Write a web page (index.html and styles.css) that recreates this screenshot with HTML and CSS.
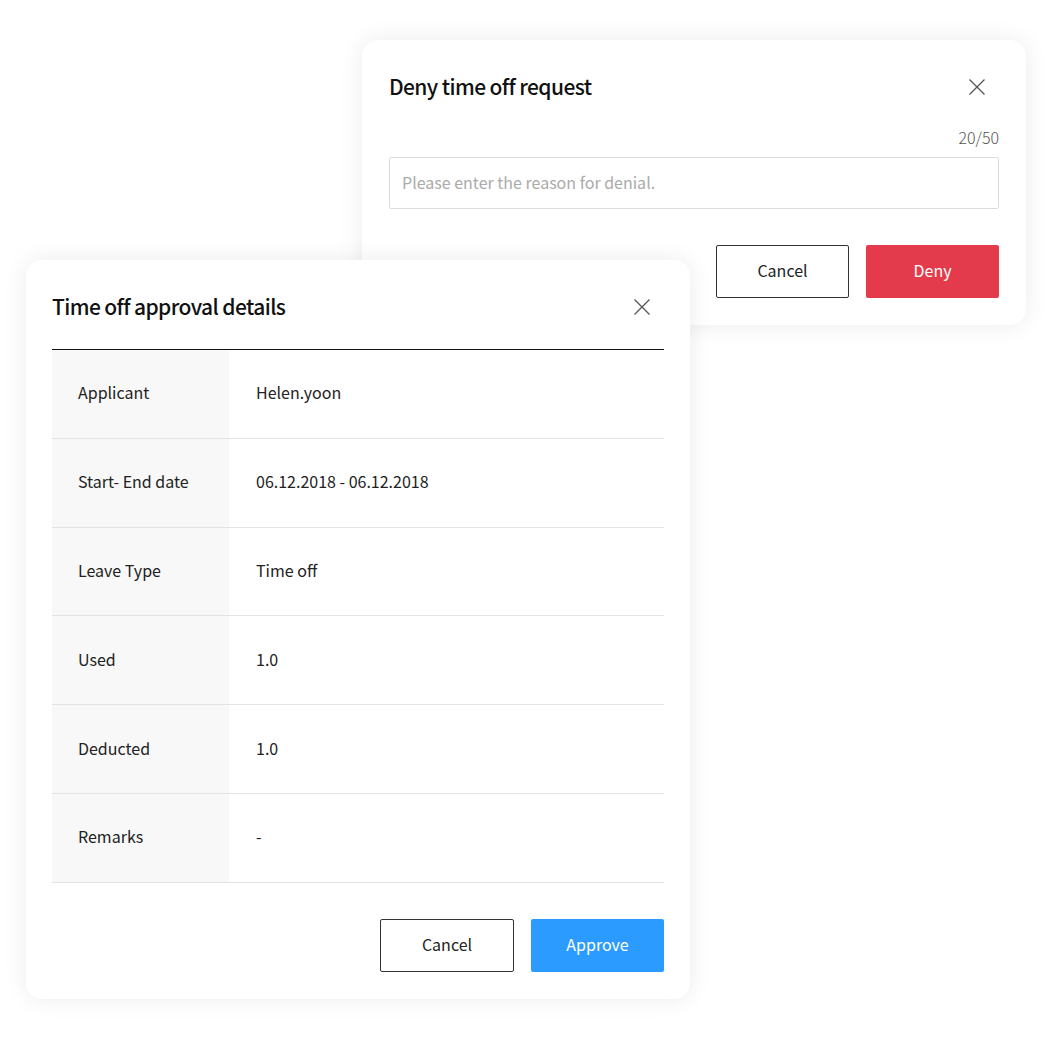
FILE: index.html
```html
<!DOCTYPE html>
<html lang="en">
<head>
<meta charset="utf-8">
<title>Time off approval</title>
<link rel="stylesheet" href="styles.css">
</head>
<body>
<div class="canvas">
  <section class="dialog dialog-deny">
    <header class="dialog-header">
      <h2 class="dialog-title">Deny time off request</h2>
      <button class="close-btn" aria-label="Close">
        <svg width="16" height="16" viewBox="0 0 16 16"><path d="M0.5 0.5 L15.5 15.5 M15.5 0.5 L0.5 15.5" stroke="#555" stroke-width="1.3" fill="none"/></svg>
      </button>
    </header>
    <div class="counter">20/50</div>
    <div class="text-input">Please enter the reason for denial.</div>
    <div class="actions">
      <button class="btn btn-outline">Cancel</button>
      <button class="btn btn-red">Deny</button>
    </div>
  </section>

  <section class="dialog dialog-details">
    <header class="dialog-header">
      <h2 class="dialog-title">Time off approval details</h2>
      <button class="close-btn" aria-label="Close">
        <svg width="16" height="16" viewBox="0 0 16 16"><path d="M0.5 0.5 L15.5 15.5 M15.5 0.5 L0.5 15.5" stroke="#555" stroke-width="1.3" fill="none"/></svg>
      </button>
    </header>
    <div class="details">
      <div class="row"><div class="label">Applicant</div><div class="value">Helen.yoon</div></div>
      <div class="row"><div class="label">Start- End date</div><div class="value">06.12.2018 - 06.12.2018</div></div>
      <div class="row"><div class="label">Leave Type</div><div class="value">Time off</div></div>
      <div class="row"><div class="label">Used</div><div class="value">1.0</div></div>
      <div class="row"><div class="label">Deducted</div><div class="value">1.0</div></div>
      <div class="row"><div class="label">Remarks</div><div class="value">-</div></div>
    </div>
    <div class="actions">
      <button class="btn btn-outline">Cancel</button>
      <button class="btn btn-blue">Approve</button>
    </div>
  </section>
</div>
</body>
</html>
```

FILE: styles.css
```css
* { box-sizing: border-box; }
html, body {
  margin: 0;
  padding: 0;
  background: #ffffff;
}
body {
  font-family: "Noto Sans CJK KR", "Noto Sans", sans-serif;
  color: #111;
}
.canvas {
  position: relative;
  width: 1060px;
  height: 1064px;
}
.dialog {
  position: absolute;
  width: 664px;
  background: #fff;
  border-radius: 16px;
  box-shadow: 0 0 24px rgba(0, 0, 0, 0.08);
  padding: 26px 27px 27px;
  display: flex;
  flex-direction: column;
}
.dialog-deny {
  left: 362px;
  top: 40px;
}
.dialog-details {
  left: 26px;
  top: 260px;
  padding-left: 26px;
  padding-right: 26px;
}
.dialog-header {
  height: 42px;
  display: flex;
  align-items: center;
  justify-content: space-between;
}
.dialog-title {
  margin: 0;
  padding-bottom: 2px;
  font-size: 21px;
  font-weight: 500;
  letter-spacing: -0.6px;
  color: #111;
}
.close-btn {
  border: 0;
  background: none;
  padding: 0;
  margin-right: 14px;
  width: 16px;
  height: 16px;
  display: flex;
}
.counter {
  margin-top: 19px;
  height: 20px;
  line-height: 20px;
  text-align: right;
  font-size: 16px;
  font-weight: 300;
  color: #555;
}
.text-input {
  margin-top: 10px;
  height: 52px;
  border: 1px solid #dcdcdc;
  border-radius: 2px;
  padding: 0 12px 2px;
  display: flex;
  align-items: center;
  font-size: 16px;
  color: #aaa;
}
.actions {
  margin-top: 36px;
  display: flex;
  justify-content: flex-end;
  gap: 17px;
}
.btn {
  width: 133px;
  height: 53px;
  border-radius: 2px;
  font-family: inherit;
  font-size: 16px;
  padding: 0 0 3px;
}
.dialog-details .btn-outline {
  width: 134px;
}
.btn-outline {
  background: #fff;
  border: 1px solid #333;
  color: #222;
}
.btn-red {
  background: #e33b4b;
  border: 0;
  color: #fff;
}
.btn-blue {
  background: #2c9bff;
  border: 0;
  color: #fff;
}
.details {
  margin-top: 21px;
  border-top: 1px solid #111;
}
.row {
  display: flex;
  height: 88.8px;
  border-bottom: 1px solid #e3e3e3;
  font-size: 16px;
}
.label {
  width: 177px;
  background: #f8f8f8;
  padding: 0 0 3px 26px;
  display: flex;
  align-items: center;
  color: #222;
}
.value {
  flex: 1;
  padding: 0 0 3px 27px;
  display: flex;
  align-items: center;
  color: #222;
}
```
